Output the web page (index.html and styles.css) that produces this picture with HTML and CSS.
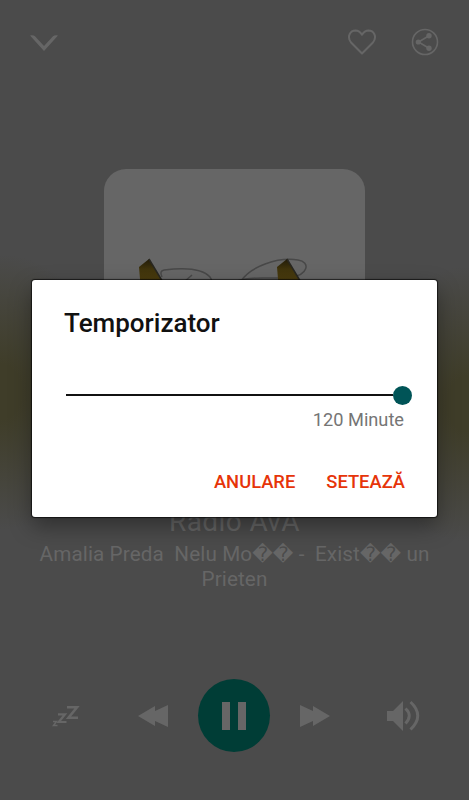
FILE: index.html
```html
<!DOCTYPE html>
<html lang="ro">
<head>
<meta charset="utf-8">
<title>Temporizator</title>
<link rel="stylesheet" href="styles.css">
</head>
<body>
<main class="player">
  <header class="topbar">
    <svg class="chevron" width="28" height="18" viewBox="0 0 28 18"><path d="M0 1.500Q3.500 1 5 2.300L14 12 23 2.300Q24.500 1 28 1.500L14 17Z"/></svg>
    <svg class="heart" width="30" height="28" viewBox="0 0 30 28"><path d="M15 25.500 4.300 14.800C-.8 8.500 3.500 2.500 8.500 2.500 11.500 2.600 13.500 4.200 15 6.700 16.500 4.200 18.500 2.600 21.500 2.500 26.500 2.500 30.800 8.500 25.700 14.800Z"/></svg>
    <svg class="share" width="28" height="28" viewBox="0 0 28 28"><circle class="line" cx="14" cy="14" r="12.500"/><path class="line" d="M18 7.800 7.500 14 18 20.200"/><circle cx="18" cy="7.800" r="2.700"/><circle cx="7.300" cy="14" r="2.600"/><circle cx="18" cy="20.200" r="2.700"/></svg>
  </header>
  <div class="cover">
    <svg width="261" height="261" viewBox="0 0 261 261">
      <defs><linearGradient id="gold" x1="0" y1="0" x2="0" y2="1"><stop offset="0" stop-color="#211b08"/><stop offset=".25" stop-color="#40340c"/><stop offset="1" stop-color="#5a4810"/></linearGradient></defs>
      <g class="loops">
        <path d="M58 108Q55 102 60 101C75 99 97 98 106 108Q109 112 106 117"/>
        <path d="M137 112C147 97 174 88 194 91C207 93 204 106 187 108C169 111 150 106 133 112"/>
        <path d="M80 113 88 106"/>
      </g>
      <path fill="url(#gold)" d="M35 98 45 90 69 130H38L36 110Z"/>
      <path fill="url(#gold)" d="M173 98 183 90 207 130H177L174 110Z"/>
      <path class="edge" d="M45 90 69 130M183 90 207 130"/>
    </svg>
  </div>
  <h1 class="station">Radio AvA</h1>
  <p class="track">Amalia Preda&nbsp; Nelu Mo<span class="unknown">&#xFFFD;&#xFFFD;</span> -&nbsp; Exist<span class="unknown">&#xFFFD;&#xFFFD;</span> un<br>Prieten</p>
  <nav class="controls">
    <svg class="sleep" width="28" height="22" viewBox="0 0 28 22"><path d="M15 2.200H25L16.500 12.800H26"/><path class="mid" d="M6 9.300H13L6.800 17H14.500"/><path class="small" d="M1 16.500H4.500L1.500 20.500H5.500"/></svg>
    <svg class="rewind" width="30" height="22" viewBox="0 0 30 22"><path d="M0 11 17 1V6L30 0V22L17 16V21Z"/></svg>
    <div class="pause"><i></i><i></i></div>
    <svg class="forward" width="30" height="22" viewBox="0 0 30 22"><path d="M30 11 13 1V6L0 0V22L13 16V21Z"/></svg>
    <svg class="volume" width="34" height="32" viewBox="0 0 34 32"><path d="M0 11H6L16 1V31L6 21H0Z"/><path class="wave" d="M18.500 8.500Q26 15.500 18.500 23.500M23.500 2Q38 15.500 23.500 29.500"/></svg>
  </nav>
</main>
<section class="dialog" role="dialog" aria-label="Temporizator">
  <h2>Temporizator</h2>
  <div class="slider"><div class="rail"></div><div class="thumb"></div></div>
  <p class="value">120 Minute</p>
  <div class="actions"><button>ANULARE</button><button>SETEAZĂ</button></div>
</section>
</body>
</html>
```
FILE: styles.css
```css
* { box-sizing: border-box; }
body {
  margin: 0;
  width: 469px;
  height: 800px;
  position: relative;
  overflow: hidden;
  font-family: Roboto, sans-serif;
  background: #4b4b4b;
}
h1, h2, p { margin: 0; font-weight: 400; }
svg { display: block; fill: #666; flex: none; }

.player {
  height: 800px;
  display: flex;
  flex-direction: column;
  align-items: center;
  color: #666;
  background:
    radial-gradient(ellipse 110px 138px at 0 392px, #3f3d29 0%, #3f3d29 20%, transparent 100%),
    radial-gradient(ellipse 110px 138px at 469px 404px, #3f3d29 0%, #3f3d29 20%, transparent 100%),
    #4b4b4b;
}
.topbar {
  width: 100%;
  height: 84px;
  padding: 0 30px;
  display: flex;
  align-items: center;
}
.chevron { margin: 2px auto 0 0; }
.heart { margin-right: 34px; fill: none; stroke: #666; stroke-width: 2; stroke-linejoin: round; }
.share .line { fill: none; stroke: #666; stroke-width: 1.6; }

.cover {
  width: 261px;
  height: 261px;
  margin-top: 85px;
  border-radius: 22px;
  background: #666;
  overflow: hidden;
}
.loops { fill: none; stroke: #484848; stroke-width: 1.5; }
.edge { fill: none; stroke: #292721; stroke-width: 1.5; }

.station { margin-top: 76px; font-size: 28px; line-height: 32px; letter-spacing: .4px; }
.track { margin-top: 4px; font-size: 20.7px; line-height: 25px; text-align: center; white-space: nowrap; letter-spacing: .1px; }
.unknown { font-family: "DejaVu Sans", sans-serif; font-size: 20px; line-height: 1; }

.controls {
  width: 100%;
  margin-top: 87px;
  padding: 0 48px 0 52px;
  display: flex;
  align-items: center;
}
.sleep { fill: none; stroke: #666; stroke-width: 2.6; }
.sleep .mid { stroke-width: 2.2; }
.sleep .small { stroke-width: 1.5; }
.rewind { margin-left: 58px; }
.pause {
  width: 73px;
  height: 73px;
  margin: 0 30px;
  border-radius: 50%;
  background: #003d36;
  display: flex;
  align-items: center;
  justify-content: center;
  gap: 8px;
}
.pause i { width: 8px; height: 28px; background: #666; }
.volume { margin-left: 57px; }
.volume .wave { fill: none; stroke: #666; stroke-width: 3; }

.dialog {
  position: absolute;
  left: 32px;
  top: 280px;
  width: 405px;
  height: 237px;
  padding: 26px 32px 0;
  border-radius: 3px;
  background: #fff;
  box-shadow: 0 0 1px 1px rgba(0,0,0,.65), 0 9px 22px rgba(0,0,0,.38);
}
.dialog h2 { font-size: 26px; line-height: 34px; font-weight: 500; color: #111; }
.slider { display: flex; align-items: center; height: 20px; margin: 45px -7px 0 2px; }
.rail { flex: 1; height: 2px; background: #111; }
.thumb { width: 19px; height: 19px; border-radius: 50%; background: #005457; }
.value { margin: 3px 1px 0 0; text-align: right; font-size: 18.2px; line-height: 24px; color: #757575; }
.actions { display: flex; justify-content: flex-end; gap: 31px; margin-top: 37px; }
.actions button {
  padding: 0;
  border: 0;
  background: none;
  font: 500 18.35px/26px Roboto, sans-serif;
  color: #e63409;
}
```
